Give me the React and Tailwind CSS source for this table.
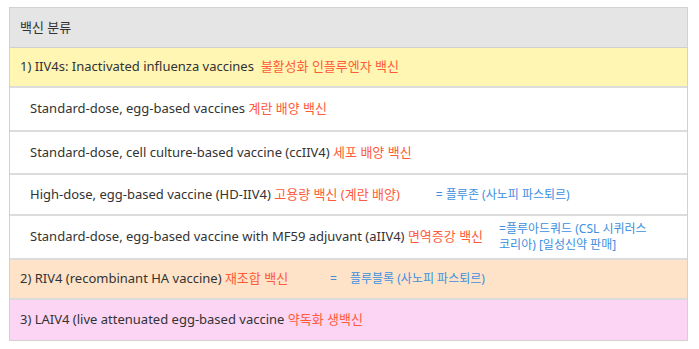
import React from "react";

const font = { fontFamily: '"Noto Sans", "Noto Sans CJK KR", sans-serif' };

const Red = ({ children }) => <span className="text-[#ff5b3a]">{children}</span>;

const Blue = ({ children, className = "" }) => (
  <span className={`text-[12px] text-[#3d8fe0] ${className}`}>{children}</span>
);

const App = () => {
  return (
    <div className="w-[699px] h-[349px] bg-white pt-[7px] pl-[9px]" style={font}>
      <div className="w-[679px] border border-[#d2d2d2] text-[13px] text-[#333]">
        {/* header */}
        <div className="h-[40px] flex items-center px-[10px] bg-[#e5e5e5] border-b border-[#cfcfcf]">
          백신 분류
        </div>

        {/* 1) IIV4s */}
        <div className="h-[40px] flex items-center px-[10px] bg-[#fff6b3] border-b-2 border-[#dcdcdc]">
          1) IIV4s: Inactivated influenza vaccines&nbsp;&nbsp;<Red>불활성화 인플루엔자 백신</Red>
        </div>

        <div className="h-[44px] flex items-center pl-[20px] border-b-2 border-[#dcdcdc]">
          Standard-dose, egg-based vaccines&nbsp;<Red>계란 배양 백신</Red>
        </div>

        <div className="h-[43px] flex items-center pl-[20px] border-b-2 border-[#dcdcdc]">
          Standard-dose, cell culture-based vaccine (ccIIV4)&nbsp;<Red>세포 배양 백신</Red>
        </div>

        <div className="h-[41px] flex items-center pl-[20px] border-b-2 border-[#dcdcdc]">
          High-dose, egg-based vaccine (HD-IIV4)&nbsp;<Red>고용량 백신 (계란 배양)</Red>
          <Blue className="ml-[36px]">= 플루존 (사노피 파스퇴르)</Blue>
        </div>

        <div className="h-[44px] flex items-center pl-[20px] border-b-2 border-[#dcdcdc]">
          Standard-dose, egg-based vaccine with MF59 adjuvant (aIIV4)&nbsp;<Red>면역증강 백신</Red>
          <Blue className="ml-[16px] w-[162px] leading-[16px] break-keep">
            =플루아드쿼드 (CSL 시퀴러스 코리아) [일성신약 판매]
          </Blue>
        </div>

        {/* 2) RIV4 */}
        <div className="h-[40px] flex items-center px-[10px] bg-[#fee3c8] border-b-2 border-[#dcdcdc]">
          2) RIV4 (recombinant HA vaccine)&nbsp;<Red>재조합 백신</Red>
          <Blue className="ml-[42px]">=</Blue>
          <Blue className="ml-[13px]">플루블록 (사노피 파스퇴르)</Blue>
        </div>

        {/* 3) LAIV4 */}
        <div className="h-[40px] flex items-center px-[10px] bg-[#fbd5f3]">
          3) LAIV4 (live attenuated egg-based vaccine&nbsp;<Red>약독화 생백신</Red>
        </div>
      </div>
    </div>
  );
};

export default App;
